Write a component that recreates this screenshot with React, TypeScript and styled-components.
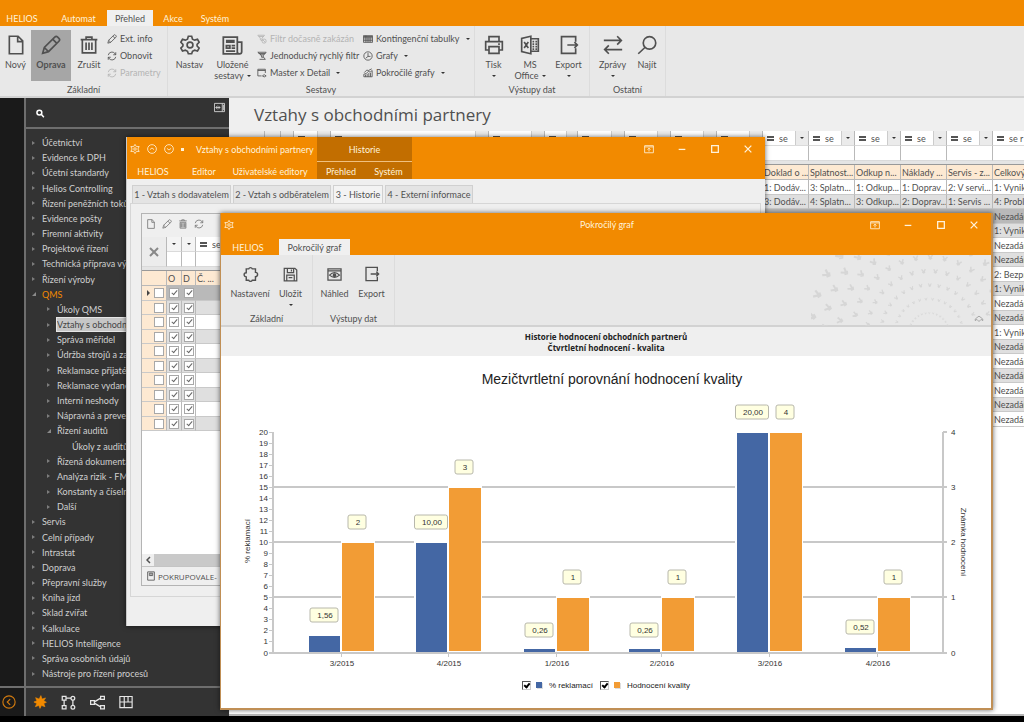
import React from "react";
import styled, { createGlobalStyle, css } from "styled-components";

const ORANGE = "#f28a00";
const INK = "#505050";

const GlobalStyle = createGlobalStyle`
  *, *::before, *::after { box-sizing: border-box; }
  body {
    margin: 0;
    background: #000;
    color: ${INK};
    font: 9px/11px Lato, "Open Sans", sans-serif;
    overflow: hidden;
  }
  button { font: inherit; color: inherit; border: 0; padding: 0; background: none; cursor: pointer; }
  h1, h2, ul, p { margin: 0; padding: 0; }
  ul { list-style: none; }
  table { border-collapse: separate; border-spacing: 0; }
`;

/* ---------- icons ---------- */

const icons: Record<string, React.ReactNode> = {
  file: <path d="M4 1.5h10.500l5.500 5.500v15.500h-16zM14 2v6h6" />,
  pencil: <path d="M2 22l2-7L16.500 2.500a2.500 2.500 0 0 1 3.500 0l1.500 1.500a2.500 2.500 0 0 1 0 3.500L9 20zM4 15l5 5M14 5l5 5" />,
  trash: <path d="M2 5.500h20M8.500 5.500v-3h7v3M4 5.500v16h16v-16M8.500 9v9M12 9v9M15.500 9v9" />,
  trashSolid: <path d="M3 4.500h18M9 4.500v-2.500h6v2.500M5 8v14h14V8zM9 10v10M12 10v10M15 10v10M7 10v10M17 10v10" />,
  refresh: <path d="M3 10a9 9 0 0 1 16-4l2 3M21 3v6h-6M21 14a9 9 0 0 1-16 4l-2-3M3 21v-6h6" />,
  gear: (
    <>
      <path d="M10 1.500h4l1 3.500 2.500 1.200 3.500-1 2 3.500-2.500 2.500v2l2.500 2.500-2 3.500-3.500-1L15 19.500l-1 3h-4l-1-3-2.500-1.300-3.500 1-2-3.500 2.500-2.500v-2L1 8.700l2-3.500 3.500 1L9 5z" />
      <circle cx="12" cy="12" r="3.500" />
    </>
  ),
  news: <path d="M1.500 2.500h16v19h-16zM17.500 8h5v11a2.500 2.500 0 0 1-5 0M4.500 6.500h10M4.500 8h10M5 12h4v3H5zM11 12h4M11 15h4M4.500 18.500h10.500" />,
  funnel: (
    <>
      <path d="M2 3h16l-6 7v6l-4-2v-4zM4 6h12" />
      <circle cx="17" cy="17" r="5" />
      <path d="M14 14l6 6" />
    </>
  ),
  funnelSolid: <path d="M2 3h20l-7 8v4h-4v-4zM4 6h16M7 9h10M6 20h14M15 14l5 6" />,
  detail: <path d="M20 12V3H2v16h9M2 6h18M13 19q4-6 9 0q-5 5-9 0z" />,
  pivot: <path d="M1 4h22v16H1zM1 8h22M1 12h22M1 16h22M7 4v16M12 8v12M17 8v12M2 6h20" />,
  pie: <path d="M12 2a10 10 0 1 0 0 20a10 10 0 1 0 0-20zM12 5v8h6M12 13l-5 4" />,
  areaChart: <path d="M2 21h20V6l-5 4-4-2-5 5-6 2zM6 21v-5M10 21v-7M14 21v-9M18 21v-9M3 11l6-6 4 1 8-4" />,
  printer: <path d="M6 8V2h12v6M6 18H2V8h20v10h-4M6 14h12v8H6zM17 11h2" />,
  excel: <path d="M13 1.500v21L2 20V4zM13 4.500h9v15h-9M5 8.500l5 7M10 8.500l-5 7M15 8h2M18.500 8h2M15 11h2M18.500 11h2M15 14h2M18.500 14h2M15 17h2M18.500 17h2" />,
  exportBox: <path d="M20 8V2H3v20h17v-6M10 12h12M18.500 8.500L22 12l-3.500 3.500" />,
  swap: <path d="M1 6.500h21M17 1.500l5 5-5 5M23 17.500H2M7 12.500l-5 5 5 5" />,
  search: <path d="M15 2a7.500 7.500 0 1 1 0 15a7.500 7.500 0 1 1 0-15zM9.500 15L1.500 22.500" />,
  lens: <path d="M9 3a6.500 6.500 0 1 1 0 13a6.500 6.500 0 1 1 0-13zM14 14l7 8" />,
  dock: <path d="M1 3h22v18H1zM18 3v18M20.500 6v12M4 12h10M8 8l-4 4 4 4M11 9v6" />,
  up: <path d="M12 1.500a10.500 10.500 0 1 0 0 21a10.500 10.500 0 1 0 0-21zM7 13.500l5-4 5 4" />,
  down: <path d="M12 1.500a10.500 10.500 0 1 0 0 21a10.500 10.500 0 1 0 0-21zM7 10.500l5 4 5-4" />,
  back: <path d="M12 1.500a10.500 10.500 0 1 0 0 21a10.500 10.500 0 1 0 0-21zM14 7l-5 5 5 5" />,
  star: (
    <>
      <path d="M12 1l3.500 5.500 6.500-.5-3 6 3 6-6.500-.500L12 23l-3.500-5.500L2 18l3-6-3-6 6.500.500z" />
      <circle cx="12" cy="12" r="3" />
    </>
  ),
  starSolid: <path fill="currentColor" d="M13.500 1l2 6 6-2-3 5 4.500 2.500-4.500 2 2 5.500-6-2-2.500 5-2-5-6 2 2.500-5.500-5-2.500 5-2-2-5.500 6 2.500z" />,
  nodes: (
    <>
      <path d="M2 2h6v6H2zM2 17h6v5H2zM8 5h8M5 8v9M19 8v9" />
      <circle cx="19" cy="5" r="3" />
      <circle cx="19" cy="19.500" r="3" />
    </>
  ),
  share: <path d="M1 9h6v6H1zM17 2h6v5h-6zM17 17h6v5h-6zM7 11l10-6M7 13l10 6" />,
  board: <path d="M1.500 2.500h21v19h-21zM9 2.500v19M9 12h13M15.500 2.500v9.500M1.500 12H9" />,
  pin: <path d="M1.500 4h21v17h-21zM1.500 7h21M12 18V10M8.500 13.500L12 10l3.500 3.500" />,
  minimize: <path d="M4 13h16" />,
  maximize: <path d="M4 4h16v16H4z" />,
  close: <path d="M4 4l16 16M20 4L4 20" />,
  puzzle: <path d="M6 4h3.500a2.700 2.700 0 0 1 5 0H19v5a3 3 0 0 1 0 6v5h-4.500a2.700 2.700 0 0 1-5 0H6v-4.500a3 3 0 1 1 0-6z" />,
  save: <path d="M2 2h17l3 3v17H2zM7 2v7h10V2M6 22v-9h12v9M13.500 4v3M9 17h6" />,
  preview: (
    <>
      <path d="M1.500 3h21v18h-21zM1.500 6h21" />
      <path d="M4 13q8-8 16 0q-8 7-16 0z" />
      <circle cx="12" cy="13" r="2" fill="currentColor" />
    </>
  ),
  collapse: <path d="M3 12l9-7 9 7v4l-4-3-5 5-5-5-4 3z" />,
  card: <path d="M4 2h16v20H4zM8 5h8v6H8zM12 5v6" />,
};

const Svg = styled.svg`
  display: block;
  flex: none;
  fill: none;
  stroke: currentColor;
`;

function Icon({ name, size, weight = 2 }: { name: string; size: number; weight?: number }) {
  return (
    <Svg width={size} height={size} viewBox="0 0 24 24" strokeWidth={weight} aria-hidden="true">
      {icons[name]}
    </Svg>
  );
}

/* ---------- shell ---------- */

const Shell = styled.div`
  position: relative;
  display: flex;
  flex-direction: column;
  height: 100vh;
  overflow: hidden;
  background: #000;
  padding-bottom: 6px;
`;

const AppHeader = styled.header`
  flex: none;
  display: flex;
  align-items: flex-end;
  height: 26px;
  background: ${ORANGE};
`;

const TabButton = styled.button<{ $width: number; $active?: boolean }>`
  width: ${(p) => p.$width}px;
  height: 16px;
  line-height: 18px;
  white-space: nowrap;
  color: #fff3dc;
  ${(p) => p.$active && css`background: #f0f0f0; color: ${INK};`}
`;

const HeliosTab = styled(TabButton)`
  margin-right: 6px;
`;

/* ---------- ribbon ---------- */

const Ribbon = styled.div`
  flex: none;
  display: flex;
  position: relative;
  height: 72px;
  background: #e8e8e8;
  border-bottom: 2px solid #d2d2d2;
`;

const Group = styled.section<{ $width: number }>`
  display: flex;
  flex-direction: column;
  width: ${(p) => p.$width}px;
  padding-top: 4px;
  border-right: 1px solid #dcdcdc;
`;

const GroupBody = styled.div<{ $inset?: number }>`
  display: flex;
  height: 54px;
  padding-left: ${(p) => p.$inset ?? 0}px;
`;

const GroupCaption = styled.p`
  text-align: center;
`;

const BigButton = styled.button<{ $width: number; $active?: boolean }>`
  display: flex;
  flex-direction: column;
  align-items: center;
  width: ${(p) => p.$width}px;
  height: 51px;
  padding-top: 5px;
  white-space: nowrap;
  ${(p) => p.$active && css`background: #a6a6a6; font-weight: 700;`}
`;

const BigIcon = styled.span`
  display: flex;
  align-items: center;
  height: 20px;
  margin-bottom: 4px;
`;

const LabelLine = styled.span`
  display: flex;
  align-items: center;
  justify-content: center;
  gap: 3px;
  min-height: 11px;
`;

const Caret = styled.span`
  border: 2px solid transparent;
  border-top-color: #333;
  border-bottom: 0;
`;

const SmallList = styled.div<{ $width: number }>`
  display: flex;
  flex-direction: column;
  width: ${(p) => p.$width}px;
`;

const SmallButton = styled.button`
  display: flex;
  align-items: center;
  gap: 3px;
  height: 17px;
  white-space: nowrap;
  &:disabled { color: #b4b4b4; }
`;

const SmallCaret = styled(Caret)`
  margin-left: 3px;
`;

interface BigProps {
  icon: string;
  width: number;
  lines: string[];
  caret?: boolean;
  active?: boolean;
  size?: number;
}

function Big({ icon, width, lines, caret, active, size = 20 }: BigProps) {
  return (
    <BigButton $width={width} $active={active}>
      <BigIcon><Icon name={icon} size={size} /></BigIcon>
      <LabelLine>{lines[0]}</LabelLine>
      {(lines[1] || caret) && (
        <LabelLine>
          {lines[1]}
          {caret && <Caret />}
        </LabelLine>
      )}
    </BigButton>
  );
}

function Small({ icon, label, caret, disabled }: { icon: string; label: string; caret?: boolean; disabled?: boolean }) {
  return (
    <SmallButton disabled={disabled}>
      <Icon name={icon} size={10} weight={2} />
      {label}
      {caret && <SmallCaret />}
    </SmallButton>
  );
}

/* ---------- navigation ---------- */

const Body = styled.div`
  flex: 1;
  min-height: 0;
  display: flex;
`;

const Rail = styled.div`
  width: 24px;
  display: flex;
  flex-direction: column;
  justify-content: flex-end;
  background: #1a1a1a;
`;

const FootBar = styled.div`
  flex: none;
  display: flex;
  align-items: center;
  gap: 14px;
  height: 30px;
  border-top: 2px solid #6e6e6e;
  color: #e6e6e6;
`;

const RailFoot = styled(FootBar)`
  padding-left: 2px;
  color: #d07a10;
`;

const SideFoot = styled(FootBar)`
  padding-left: 7px;
`;

const OrangeButton = styled.button`
  color: ${ORANGE};
`;

const Sidebar = styled.nav`
  width: 205px;
  display: flex;
  flex-direction: column;
  background: #333;
  border-left: 2px solid #6e6e6e;
  color: #d0d0d0;
`;

const SearchBar = styled.div`
  flex: none;
  display: flex;
  justify-content: space-between;
  height: 31px;
  padding: 4px 4px 0 10px;
  border-bottom: 2px solid #6e6e6e;
`;

const SearchButton = styled.button`
  align-self: flex-start;
  padding-top: 7px;
  color: #fff;
`;

const DockButton = styled.button`
  align-self: flex-start;
`;

const Tree = styled.ul`
  flex: 1;
  display: flex;
  flex-direction: column;
  padding: 6px 0 5px;
`;

const TreeItem = styled.li<{ $level: number }>`
  flex: 1;
  display: flex;
  align-items: center;
  padding-left: ${(p) => 6 + p.$level * 15}px;
  white-space: nowrap;
`;

const Arrow = styled.span<{ $kind: "closed" | "open" | "none" }>`
  width: 10px;
  &::before {
    content: "";
    display: ${(p) => (p.$kind === "none" ? "none" : "block")};
    width: 0;
    border: 2px solid transparent;
    border-left: 3px solid #7d7d7d;
    ${(p) => p.$kind === "open" && css`border: 0; border-left: 4px solid transparent; border-bottom: 4px solid #8a8a8a;`}
  }
`;

const TreeLink = styled.a<{ $state?: "open" | "selected" }>`
  color: inherit;
  text-decoration: none;
  line-height: 13px;
  ${(p) => p.$state === "open" && css`color: ${ORANGE};`}
  ${(p) => p.$state === "selected" && css`
    flex: 1;
    background: #c6c6c6;
    color: #444;
    outline: 1px solid #e6e6e6;
  `}
`;

type Node = [label: string, level: number, kind?: "open" | "leaf" | "root" | "selected"];
const tree: Node[] = [
  ["Účetnictví", 0], ["Evidence k DPH", 0], ["Účetní standardy", 0], ["Helios Controlling", 0],
  ["Řízení peněžních toků", 0], ["Evidence pošty", 0], ["Firemní aktivity", 0], ["Projektové řízení", 0],
  ["Technická příprava výroby", 0], ["Řízení výroby", 0], ["QMS", 0, "root"], ["Úkoly QMS", 1],
  ["Vztahy s obchodními partnery", 1, "selected"], ["Správa měřidel", 1], ["Údržba strojů a zařízení", 1],
  ["Reklamace přijaté", 1], ["Reklamace vydané", 1], ["Interní neshody", 1], ["Nápravná a preventivní", 1],
  ["Řízení auditů", 1, "open"], ["Úkoly z auditů", 2, "leaf"], ["Řízená dokumentace", 1],
  ["Analýza rizik - FMEA", 1], ["Konstanty a číselníky", 1], ["Další", 1], ["Servis", 0],
  ["Celní případy", 0], ["Intrastat", 0], ["Doprava", 0], ["Přepravní služby", 0], ["Kniha jízd", 0],
  ["Sklad zvířat", 0], ["Kalkulace", 0], ["HELIOS Intelligence", 0], ["Správa osobních údajů", 0],
  ["Nástroje pro řízení procesů", 0],
];

const arrowOf = (kind: Node[2]) => (kind === "leaf" ? "none" : kind === "open" || kind === "root" ? "open" : "closed");

/* ---------- tables ---------- */

const Content = styled.main`
  flex: 1;
  min-width: 0;
  overflow: hidden;
  background: #fff;
  border-bottom: 2px solid #b5b5b5;
`;

const PageTitle = styled.h1`
  height: 33px;
  padding-left: 25px;
  background: #efefef;
  font-family: "Open Sans", "Noto Sans", sans-serif;
  font-size: 17px;
  line-height: 33px;
  font-weight: 400;
`;

const GridWrap = styled.div`
  padding-left: 21px;
  background: linear-gradient(#efefef 50px, #fff 50px);
`;

const DataTable = styled.table<{ $width: number }>`
  table-layout: fixed;
  width: ${(p) => p.$width}px;
`;

const FilterCell = styled.td`
  height: 15px;
  padding: 0;
  background: #fff;
  border-right: 1px solid #b9b9b9;
  border-bottom: 1px solid #dadada;
  overflow: hidden;
`;

const BlankCell = styled(FilterCell)`
  background: #ececec;
`;

const GapCell = styled.td`
  height: 4px;
  padding: 0;
  background: #e4e4e4;
  border-bottom: 1px solid #999;
`;

const FilterOp = styled.div`
  display: flex;
  align-items: center;
  gap: 5px;
  height: 14px;
  padding-left: 4px;
  white-space: nowrap;
`;

const EqualSign = styled.span`
  flex: none;
  width: 7px;
  height: 5px;
  border: solid #555;
  border-width: 2px 0;
`;

const OpText = styled.span`
  flex: 1;
  overflow: hidden;
`;

const DropButton = styled.button`
  flex: none;
  display: flex;
  align-items: center;
  justify-content: center;
  width: 13px;
  height: 14px;
  background: #ebebeb;
  border-left: 1px solid #ccc;
`;

const HeadCell = styled.th`
  height: 15px;
  padding: 0 0 0 1px;
  background: #fde9d2;
  border-right: 1px solid #b9b9b9;
  border-bottom: 1px solid #b9b9b9;
  text-align: left;
  font-weight: 400;
  white-space: nowrap;
  overflow: hidden;
`;

const DataRow = styled.tr<{ $tone: "plain" | "striped" | "current" }>`
  height: ${(p) => (p.$tone === "striped" ? 14 : 15)}px;
  background: ${(p) => ({ plain: "#fff", striped: "#dfdfdf", current: "#b9b9b9" })[p.$tone]};
`;

const DataCell = styled.td`
  padding: 0 0 0 1px;
  line-height: 13px;
  border-right: 1px solid #b9b9b9;
  border-bottom: 1px solid #c9c9c9;
  white-space: nowrap;
  overflow: hidden;
`;

const tone = (i: number, current: number) => (i === current ? "current" : i % 2 ? "striped" : "plain");

const leadWidths = [15, 16, 13, 37, 158, 56, 33, 47, 46, 46, 46];
const mainCols = ["Doklad o ...", "Splatnost...", "Odkup n...", "Náklady ...", "Servis - z...", "Celkový"];
const firstRows = [
  ["1: Dodáv...", "3: Splatn...", "1: Odkup...", "1: Doprav...", "2: V servi...", "1: Vynikající"],
  ["3: Dodáv...", "4: Splatn...", "3: Odkup...", "2: Doprav...", "1: Servis ...", "4: Problémový"],
];
const none = "Nezadáno";
const overall = [
  none, "1: Vynikající", none, none, "2: Bezproblémový", "1: Vynikající", none, none, "1: Vynikající",
  none, none, none, none, none, none,
];
const mainRows = [...firstRows, ...overall.map((o) => ["", "", "", "", "", o])];

function FilterInput({ text = "" }: { text?: string }) {
  return (
    <FilterOp>
      <EqualSign />
      <OpText>{text}</OpText>
      <DropButton aria-label="Operátor"><Caret /></DropButton>
    </FilterOp>
  );
}

function MainGrid() {
  return (
    <GridWrap>
      <DataTable $width={843}>
        <colgroup>
          {leadWidths.map((w, i) => <col key={i} style={{ width: w }} />)}
          {mainCols.map((c, i) => <col key={c} style={{ width: i === 5 ? 100 : 46 }} />)}
        </colgroup>
        <tbody>
          <tr>
            {leadWidths.map((w, i) =>
              i === 0 || w < 20 ? <BlankCell key={i} /> : <FilterCell key={i}><FilterInput /></FilterCell>
            )}
            {mainCols.map((c) => <FilterCell key={c}><FilterInput text="se r" /></FilterCell>)}
          </tr>
          <tr>
            {leadWidths.map((_, i) => <FilterCell key={i} />)}
            {mainCols.map((c) => <FilterCell key={c} />)}
          </tr>
          <tr><GapCell colSpan={17} /></tr>
          <tr>
            {leadWidths.map((_, i) => <HeadCell key={i} />)}
            {mainCols.map((c) => <HeadCell key={c} scope="col">{c}</HeadCell>)}
          </tr>
          {mainRows.map((row, r) => (
            <DataRow key={r} $tone={tone(r, 2)}>
              {leadWidths.map((_, i) => <DataCell key={i} />)}
              {row.map((v, i) => <DataCell key={i}>{v}</DataCell>)}
            </DataRow>
          ))}
        </tbody>
      </DataTable>
    </GridWrap>
  );
}

/* ---------- floating windows ---------- */

const WindowFrame = styled.section`
  position: absolute;
  display: flex;
  flex-direction: column;
  overflow: hidden;
  background: #efefef;
  box-shadow: 0 0 5px rgba(0, 0, 0, 0.6);
`;

const PartnerWindow = styled(WindowFrame)`
  left: 126px;
  top: 137px;
  right: 259px;
  bottom: 96px;
  border-left: 1px solid #c8c8c8;
`;

const ChartWindow = styled(WindowFrame)`
  left: 220px;
  top: 213px;
  right: 31px;
  bottom: 12px;
  border: solid #c08f55;
  border-width: 0 2px 2px 1px;
`;

const WindowHead = styled.header`
  flex: none;
  position: relative;
  display: flex;
  height: 42px;
  background: ${ORANGE};
  color: #fff3dc;
`;

const HeadColumn = styled.div<{ $width: number; $dark?: boolean }>`
  width: ${(p) => p.$width}px;
  display: flex;
  flex-direction: column;
  ${(p) => p.$dark && css`background: #c26e00;`}
`;

const QuickAccess = styled.div`
  display: flex;
  align-items: center;
  gap: 7px;
  height: 24px;
  padding-left: 3px;
  white-space: nowrap;
`;

const Dot = styled.span`
  width: 3px;
  height: 3px;
  background: #fff3dc;
`;

const WindowTitle = styled.h2`
  font-size: 9px;
  font-weight: 400;
`;

const QuickTitle = styled(WindowTitle)`
  padding-left: 5px;
`;

const CenterTitle = styled(WindowTitle)`
  flex: 1;
  line-height: 24px;
  text-align: center;
`;

const ContextTitle = styled.p`
  height: 25px;
  line-height: 25px;
  text-align: center;
  border-bottom: 1px solid #f0c080;
`;

const TabRow = styled.div`
  display: flex;
  flex: 1;
  align-items: flex-end;
`;

const Controls = styled.div`
  display: flex;
  align-items: center;
  gap: 23px;
  height: 24px;
  margin-left: auto;
  padding-right: 12px;
`;

function WindowControls() {
  return (
    <Controls>
      {["pin", "minimize", "maximize", "close"].map((n) => (
        <button key={n} aria-label={n}><Icon name={n} size={10} weight={n === "pin" ? 2 : 3} /></button>
      ))}
    </Controls>
  );
}

const PageTabs = styled.div`
  flex: none;
  display: flex;
  align-items: flex-end;
  gap: 2px;
  height: 24px;
  padding: 0 5px;
`;

const PageTab = styled.button<{ $width: number; $active?: boolean }>`
  width: ${(p) => p.$width}px;
  height: 18px;
  white-space: nowrap;
  background: ${(p) => (p.$active ? "#f3f3f3" : "#e4e4e4")};
  border: 1px solid #d0d0d0;
  border-bottom: 0;
`;

const PagePanel = styled.div`
  flex: 1;
  margin: 0 4px 29px 3px;
  padding: 9px 10px 10px;
  border: 1px solid #d6d6d6;
  display: flex;
  flex-direction: column;
`;

const InnerGrid = styled.div`
  flex: 1;
  display: flex;
  flex-direction: column;
  overflow: hidden;
  border: 1px solid #b4b4b4;
  background: #fff;
`;

const InnerTools = styled.div`
  flex: none;
  display: flex;
  align-items: center;
  gap: 6px;
  height: 23px;
  padding: 0 0 4px 4px;
  background: #efefef;
  color: #777;
`;

const NarrowDrop = styled(DropButton)`
  width: 100%;
  border: 0;
  background: #f4f4f4;
`;

const ClearButton = styled.button`
  display: flex;
  align-items: center;
  justify-content: center;
  width: 100%;
  height: 29px;
  color: #888;
`;

const CheckCell = styled(DataCell)`
  padding: 0;
`;

const SelectCell = styled(CheckCell)`
  background: #fde9d2;
`;

const CheckWrap = styled.label<{ $end?: boolean }>`
  display: flex;
  align-items: center;
  justify-content: ${(p) => (p.$end ? "space-between" : "center")};
  height: 12px;
  padding: ${(p) => (p.$end ? "0 2px 0 5px" : "0")};
`;

const RowMarker = styled.span<{ $on: boolean }>`
  border: 3px solid transparent;
  border-left-color: ${(p) => (p.$on ? "#444" : "transparent")};
  border-right: 0;
`;

const Check = styled.input.attrs({ type: "checkbox" })`
  appearance: none;
  position: relative;
  flex: none;
  width: 10px;
  height: 10px;
  margin: 0;
  background: #fff;
  border: 1px solid #a8a8a8;
  &:checked::after {
    content: "";
    position: absolute;
    left: 3px;
    top: 0;
    width: 3px;
    height: 6px;
    border: solid #666;
    border-width: 0 1px 1px 0;
    transform: rotate(40deg);
  }
`;

const ScrollBar = styled.div`
  flex: none;
  display: flex;
  align-items: center;
  height: 12px;
  margin-top: auto;
  background: linear-gradient(90deg, #efefef 12px, #c9c9c9 12px);
  padding-left: 4px;
`;

const StatusRow = styled.div`
  flex: none;
  display: flex;
  align-items: center;
  gap: 2px;
  height: 19px;
  padding-left: 4px;
  background: #efefef;
  border-top: 1px solid #c4c4c4;
  font-family: "Open Sans", "Noto Sans", sans-serif;
  font-size: 8px;
`;

function PartnersWindow() {
  return (
    <PartnerWindow aria-label="Vztahy s obchodními partnery">
      <WindowHead>
        <HeadColumn $width={190}>
          <QuickAccess>
            <Icon name="star" size={10} weight={2} />
            <Icon name="up" size={10} />
            <Icon name="down" size={10} />
            <Dot />
            <QuickTitle>Vztahy s obchodními partnery</QuickTitle>
          </QuickAccess>
          <TabRow>
            <TabButton $width={52}>HELIOS</TabButton>
            <TabButton $width={50}>Editor</TabButton>
            <TabButton $width={82}>Uživatelské editory</TabButton>
          </TabRow>
        </HeadColumn>
        <HeadColumn $width={95} $dark>
          <ContextTitle>Historie</ContextTitle>
          <TabRow>
            <TabButton $width={48}>Přehled</TabButton>
            <TabButton $width={47}>Systém</TabButton>
          </TabRow>
        </HeadColumn>
        <WindowControls />
      </WindowHead>
      <PageTabs>
        <PageTab $width={99}>1 - Vztah s dodavatelem</PageTab>
        <PageTab $width={98}>2 - Vztah s odběratelem</PageTab>
        <PageTab $width={50} $active>3 - Historie</PageTab>
        <PageTab $width={88}>4 - Externí informace</PageTab>
      </PageTabs>
      <PagePanel>
        <InnerGrid>
          <InnerTools>
            {["file", "pencil", "trashSolid", "refresh"].map((n) => (
              <button key={n} aria-label={n}><Icon name={n} size={10} /></button>
            ))}
          </InnerTools>
          <DataTable $width={254}>
            <colgroup>
              {[25, 15, 14, 200].map((w, i) => <col key={i} style={{ width: w }} />)}
            </colgroup>
            <tbody>
              <tr>
                <BlankCell rowSpan={2}>
                  <ClearButton aria-label="Zrušit filtr"><Icon name="close" size={12} weight={4} /></ClearButton>
                </BlankCell>
                <FilterCell><NarrowDrop aria-label="Operátor"><Caret /></NarrowDrop></FilterCell>
                <FilterCell><NarrowDrop aria-label="Operátor"><Caret /></NarrowDrop></FilterCell>
                <FilterCell><FilterInput text="se" /></FilterCell>
              </tr>
              <tr><FilterCell /><FilterCell /><FilterCell /></tr>
              <tr><GapCell colSpan={4} /></tr>
              <tr>
                <HeadCell />
                <HeadCell scope="col">O</HeadCell>
                <HeadCell scope="col">D</HeadCell>
                <HeadCell scope="col">Č. ...</HeadCell>
              </tr>
              {Array.from({ length: 10 }, (_, r) => (
                <DataRow key={r} $tone={tone(r, 0)}>
                  <SelectCell>
                    <CheckWrap $end><RowMarker $on={r === 0} /><Check aria-label="Vybrat" /></CheckWrap>
                  </SelectCell>
                  <CheckCell><CheckWrap><Check defaultChecked aria-label="O" /></CheckWrap></CheckCell>
                  <CheckCell><CheckWrap><Check defaultChecked aria-label="D" /></CheckWrap></CheckCell>
                  <DataCell />
                </DataRow>
              ))}
            </tbody>
          </DataTable>
          <ScrollBar>
            <Svg width="5" height="8" viewBox="0 0 5 8" strokeWidth="1.5"><path d="M4 1L1 4l3 3" /></Svg>
          </ScrollBar>
          <StatusRow>
            <Icon name="card" size={10} />
            POKRUPOVALE-
          </StatusRow>
        </InnerGrid>
      </PagePanel>
    </PartnerWindow>
  );
}

/* ---------- chart ---------- */

const CaptionBand = styled.div`
  flex: none;
  height: 29px;
  padding-top: 4px;
  text-align: center;
  font-family: "Open Sans", "Noto Sans", sans-serif;
  font-size: 8px;
  font-weight: 700;
  color: #222;
`;

const ChartArea = styled.div`
  flex: 1;
  display: flex;
  flex-direction: column;
  align-items: stretch;
  background: #fff;
  color: #222;
  font-family: "Liberation Sans", Arial, sans-serif;
  font-size: 8px;
`;

const ChartTitle = styled.h2`
  height: 45px;
  padding: 0 0 0 12px;
  font-size: 14px;
  line-height: 46px;
  font-weight: 400;
  text-align: center;
`;

const ChartSvg = styled.svg`
  display: block;
  width: 100%;
  height: 270px;
  fill: #333;
`;

const Legend = styled.div`
  display: flex;
  justify-content: center;
  align-items: center;
  gap: 7px;
  height: 28px;
`;

const LegendItem = styled.label`
  display: flex;
  align-items: center;
  gap: 5px;
`;

const Swatch = styled.span<{ $color: string }>`
  width: 6px;
  height: 6px;
  margin-right: 2px;
  background: ${(p) => p.$color};
  box-shadow: 1px 1px 0 #ddd;
`;

const LegendCheck = styled(Check)`
  width: 9px;
  height: 9px;
  border-color: #555 #ccc #ccc #555;
  &:checked::after {
    left: 2px;
    border-color: #000;
    border-width: 0 2px 2px 0;
    width: 4px;
  }
`;

const BLUE = "#4467a4";
const AMBER = "#f29c35";
const quarters = [
  { label: "3/2015", x: 341, share: 1.56, text: "1,56", mark: 2 },
  { label: "4/2015", x: 448, share: 10, text: "10,00", mark: 3 },
  { label: "1/2016", x: 556, share: 0.26, text: "0,26", mark: 1 },
  { label: "2/2016", x: 661, share: 0.26, text: "0,26", mark: 1 },
  { label: "3/2016", x: 769, share: 20, text: "20,00", mark: 4 },
  { label: "4/2016", x: 877, share: 0.52, text: "0,52", mark: 1 },
];
const BASE = 653;
const yOf = (v: number) => Math.floor(BASE - v * 11.05);

function Badge({ x, y, text }: { x: number; y: number; text: string }) {
  const w = text.length === 1 ? 18 : text.length === 4 ? 28 : 33;
  return (
    <g>
      <rect x={x - w / 2} y={y - 7} width={w} height={14} rx="2" fill="#ffffe1" stroke="#b8b8ac" />
      <text x={x + 1} y={y + 3} textAnchor="middle">{text}</text>
    </g>
  );
}

function Chart() {
  return (
    <ChartSvg viewBox="221 401 770 270" role="img" aria-label="Mezičtvrtletní porovnání hodnocení kvality">
      <g stroke="#c8c8c8" strokeWidth="2" shapeRendering="crispEdges">
        {[5, 10, 15].map((v) => <path key={v} d={`M273 ${yOf(v)}H947`} />)}
        <path d={`M269 ${BASE}H947M273 432V653M943 432V653M943 432H947`} />
        {quarters.map((q) => <path key={q.label} strokeWidth="1" d={`M${q.x} 653v4`} />)}
        {Array.from({ length: 20 }, (_, i) => <path key={i} strokeWidth="1" d={`M269 ${yOf(i + 1)}h4`} />)}
      </g>
      {Array.from({ length: 21 }, (_, i) => (
        <text key={i} x="268" y={yOf(i) + 3} textAnchor="end">{i}</text>
      ))}
      {[0, 1, 2, 3, 4].map((i) => <text key={i} x="951" y={yOf(i * 5) + 3}>{i}</text>)}
      {quarters.map((q) => {
        const top = yOf(q.share);
        const markTop = yOf(q.mark * 5);
        return (
          <g key={q.label}>
            <rect x={q.x - 34} y={top - 1} width="34" height={BASE - top} fill="#fff" />
            <rect x={q.x} y={markTop - 1} width="34" height={BASE - markTop} fill="#fff" />
            <rect x={q.x - 32} y={Math.min(top + 1, 649)} width="31" height={Math.max(BASE - top - 2, 3)} fill={BLUE} />
            <rect x={q.x + 1} y={markTop + 1} width="32" height={BASE - markTop - 3} fill={AMBER} />
            <Badge x={q.x - 17} y={top - 20} text={q.text} />
            <Badge x={q.x + 16} y={markTop - 20} text={String(q.mark)} />
            <text x={q.x + 1} y="666" textAnchor="middle">{q.label}</text>
          </g>
        );
      })}
      <text transform="translate(250 541) rotate(-90)" textAnchor="middle">% reklamací</text>
      <text transform="translate(961 542) rotate(90)" textAnchor="middle">Známka hodnocení</text>
    </ChartSvg>
  );
}

const Ornament = styled.svg`
  position: absolute;
  right: 0;
  top: 0;
  width: 180px;
  height: 71px;
`;

const CollapseButton = styled.button`
  position: absolute;
  right: 7px;
  bottom: 1px;
  color: #999;
`;

function RibbonOrnament() {
  const marks: React.ReactNode[] = [];
  for (let ring = 0; ring < 8; ring++) {
    const radius = 20 + ring * 14;
    const s = 0.7 + ring * 0.3;
    for (let k = 0; k < 16; k++) {
      const deg = 172 + k * 11 + (ring % 2) * 5;
      const a = (deg * Math.PI) / 180;
      const x = 118 + Math.cos(a) * radius;
      const y = 78 + Math.sin(a) * radius;
      marks.push(
        <path
          key={`${ring}-${k}`}
          transform={`translate(${x.toFixed(1)} ${y.toFixed(1)}) rotate(${deg + 180}) scale(${s.toFixed(2)})`}
          d="M-1.2-1.2L.6 0L-1.2 1.200M.4-.9L1.100 0L.4.9"
        />
      );
    }
  }
  return (
    <Ornament viewBox="0 0 180 71" fill="none" stroke="#d6d6d6" strokeWidth="0.8" aria-hidden="true">
      {marks}
    </Ornament>
  );
}

const FloatTabs = styled.div`
  position: absolute;
  left: 0;
  bottom: 0;
  display: flex;
  gap: 4px;
`;

function GraphWindow() {
  return (
    <ChartWindow aria-label="Pokročilý graf">
      <WindowHead>
        <HeadColumn $width={123}>
          <QuickAccess><Icon name="star" size={10} /></QuickAccess>
        </HeadColumn>
        <CenterTitle>Pokročilý graf</CenterTitle>
        <WindowControls />
        <FloatTabs>
          <TabButton $width={54}>HELIOS</TabButton>
          <TabButton $width={71} $active>Pokročilý graf</TabButton>
        </FloatTabs>
      </WindowHead>
      <Ribbon>
        <RibbonOrnament />
        <Group $width={92}>
          <GroupBody $inset={4}>
            <Big icon="puzzle" width={50} lines={["Nastavení"]} size={17} />
            <Big icon="save" width={31} lines={["Uložit"]} caret size={15} />
          </GroupBody>
          <GroupCaption>Základní</GroupCaption>
        </Group>
        <Group $width={82}>
          <GroupBody $inset={3}>
            <Big icon="preview" width={37} lines={["Náhled"]} size={15} />
            <Big icon="exportBox" width={37} lines={["Export"]} size={16} />
          </GroupBody>
          <GroupCaption>Výstupy dat</GroupCaption>
        </Group>
        <CollapseButton aria-label="Sbalit"><Icon name="collapse" size={10} /></CollapseButton>
      </Ribbon>
      <CaptionBand>
        <p>Historie hodnocení obchodních partnerů</p>
        <p>Čtvrtletní hodnocení - kvalita</p>
      </CaptionBand>
      <ChartArea>
        <ChartTitle>Mezičtvrtletní porovnání hodnocení kvality</ChartTitle>
        <Chart />
        <Legend>
          <LegendItem><LegendCheck defaultChecked /><Swatch $color={BLUE} />% reklamací</LegendItem>
          <LegendItem><LegendCheck defaultChecked /><Swatch $color={AMBER} />Hodnocení kvality</LegendItem>
        </Legend>
      </ChartArea>
    </ChartWindow>
  );
}

/* ---------- page ---------- */

export default function App() {
  return (
    <Shell>
      <GlobalStyle />
      <AppHeader>
        <HeliosTab $width={44}>HELIOS</HeliosTab>
        <TabButton $width={57}>Automat</TabButton>
        <TabButton $width={46} $active>Přehled</TabButton>
        <TabButton $width={40}>Akce</TabButton>
        <TabButton $width={44}>Systém</TabButton>
      </AppHeader>
      <Ribbon>
        <Group $width={168}>
          <GroupBody>
            <Big icon="file" width={31} lines={["Nový"]} />
            <Big icon="pencil" width={40} lines={["Oprava"]} active />
            <Big icon="trash" width={36} lines={["Zrušit"]} />
            <SmallList $width={60}>
              <Small icon="pencil" label="Ext. info" />
              <Small icon="refresh" label="Obnovit" />
              <Small icon="refresh" label="Parametry" disabled />
            </SmallList>
          </GroupBody>
          <GroupCaption>Základní</GroupCaption>
        </Group>
        <Group $width={307}>
          <GroupBody $inset={3}>
            <Big icon="gear" width={37} lines={["Nastav"]} />
            <Big icon="news" width={49} lines={["Uložené", "sestavy"]} caret size={21} />
            <SmallList $width={106}>
              <Small icon="funnel" label="Filtr dočasně zakázán" disabled />
              <Small icon="funnelSolid" label="Jednoduchý rychlý filtr" />
              <Small icon="detail" label="Master x Detail" caret />
            </SmallList>
            <SmallList $width={108}>
              <Small icon="pivot" label="Kontingenční tabulky" caret />
              <Small icon="pie" label="Grafy" caret />
              <Small icon="areaChart" label="Pokročilé grafy" caret />
            </SmallList>
          </GroupBody>
          <GroupCaption>Sestavy</GroupCaption>
        </Group>
        <Group $width={115}>
          <GroupBody>
            <Big icon="printer" width={37} lines={["Tisk"]} caret />
            <Big icon="excel" width={36} lines={["MS", "Office"]} caret />
            <Big icon="exportBox" width={41} lines={["Export"]} caret />
          </GroupBody>
          <GroupCaption>Výstupy dat</GroupCaption>
        </Group>
        <Group $width={76}>
          <GroupBody $inset={3}>
            <Big icon="swap" width={39} lines={["Zprávy"]} caret />
            <Big icon="search" width={30} lines={["Najít"]} />
          </GroupBody>
          <GroupCaption>Ostatní</GroupCaption>
        </Group>
      </Ribbon>
      <Body>
        <Rail>
          <RailFoot><button aria-label="Zpět"><Icon name="back" size={14} /></button></RailFoot>
        </Rail>
        <Sidebar>
          <SearchBar>
            <SearchButton aria-label="Hledat"><Icon name="lens" size={9} weight={4} /></SearchButton>
            <DockButton aria-label="Ukotvit"><Icon name="dock" size={11} /></DockButton>
          </SearchBar>
          <Tree>
            {tree.map(([label, level, kind]) => (
              <TreeItem key={label} $level={level}>
                <Arrow $kind={arrowOf(kind)} />
                <TreeLink
                  href="#"
                  $state={kind === "root" ? "open" : kind === "selected" ? "selected" : undefined}
                >
                  {label}
                </TreeLink>
              </TreeItem>
            ))}
          </Tree>
          <SideFoot>
            <OrangeButton aria-label="Helios"><Icon name="starSolid" size={14} weight={1} /></OrangeButton>
            <button aria-label="Procesy"><Icon name="nodes" size={15} /></button>
            <button aria-label="Vazby"><Icon name="share" size={15} /></button>
            <button aria-label="Přehled"><Icon name="board" size={14} /></button>
          </SideFoot>
        </Sidebar>
        <Content>
          <PageTitle>Vztahy s obchodními partnery</PageTitle>
          <MainGrid />
        </Content>
      </Body>
      <PartnersWindow />
      <GraphWindow />
    </Shell>
  );
}
